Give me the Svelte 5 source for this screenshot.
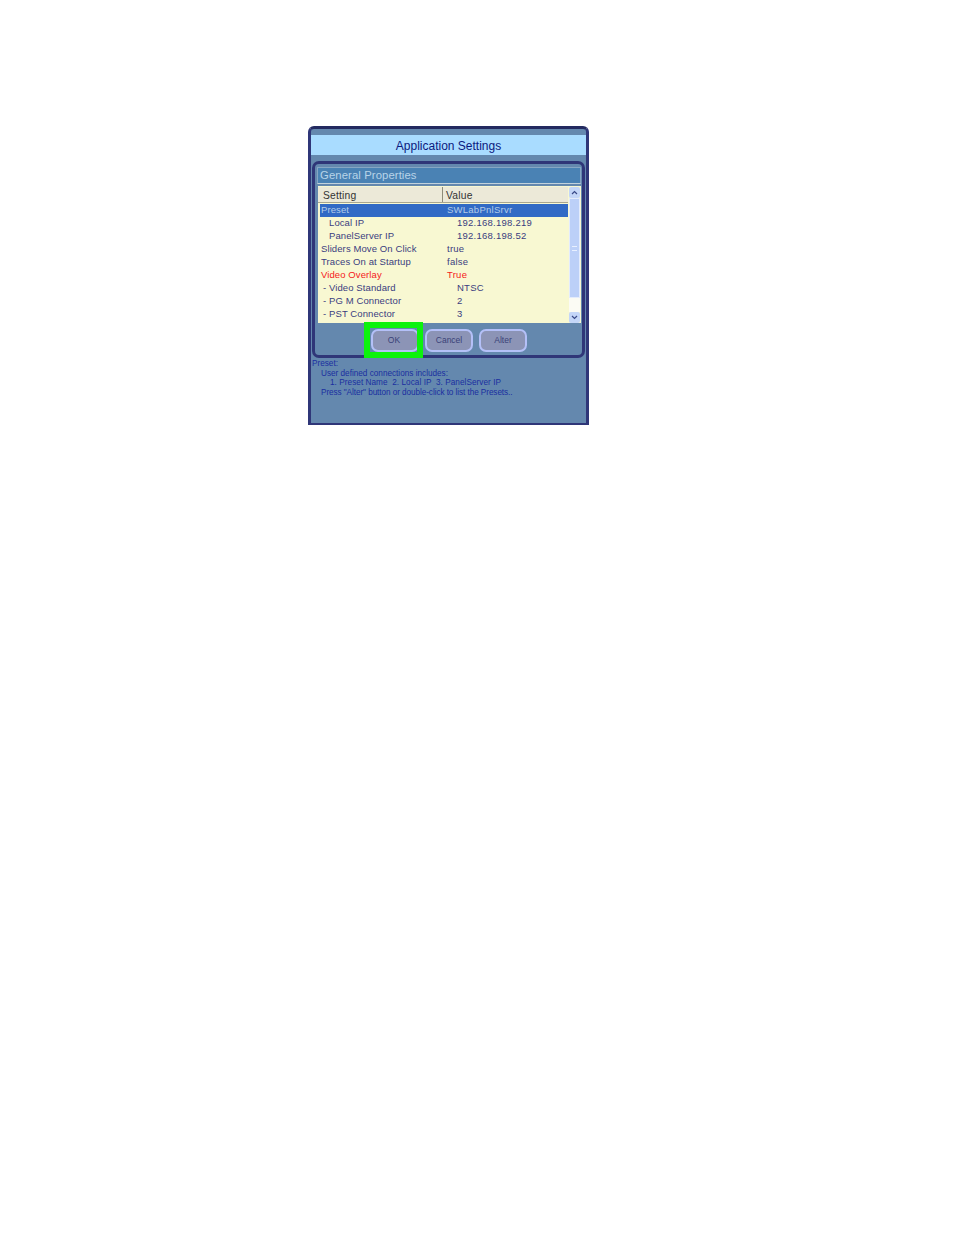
<script>
  const rows = [
    { name: 'Preset', value: 'SWLabPnlSrvr', selected: true },
    { name: 'Local IP', value: '192.168.198.219', sub: true },
    { name: 'PanelServer IP', value: '192.168.198.52', sub: true },
    { name: 'Sliders Move On Click', value: 'true' },
    { name: 'Traces On at Startup', value: 'false' },
    { name: 'Video Overlay', value: 'True', red: true },
    { name: '- Video Standard', value: 'NTSC', sub: true, dash: true },
    { name: '- PG M Connector', value: '2', sub: true, dash: true },
    { name: '- PST Connector', value: '3', sub: true, dash: true }
  ];
</script>

<div class="page">
  <div class="window">
    <div class="title">Application Settings</div>
    <div class="panel">
      <div class="section">General Properties</div>
      <div class="list">
        <div class="table">
          <div class="head">
            <div class="hcell first">Setting</div>
            <div class="hcell">Value</div>
          </div>
          {#each rows as r}
            <div class="row" class:selected={r.selected} class:red={r.red} class:sub={r.sub} class:dash={r.dash}>
              <span class="name">{r.name}</span>
              <span class="value">{r.value}</span>
            </div>
          {/each}
        </div>
        <div class="scroll">
          <div class="arrow">
            <svg width="7" height="5" viewBox="0 0 7 5"><path d="M1 4 L3.5 1.5 L6 4" fill="none" stroke="#3a4a88" stroke-width="1.2"/></svg>
          </div>
          <div class="thumb"><span class="grip"></span></div>
          <div class="track"></div>
          <div class="arrow">
            <svg width="7" height="5" viewBox="0 0 7 5"><path d="M1 1 L3.5 3.5 L6 1" fill="none" stroke="#3a4a88" stroke-width="1.2"/></svg>
          </div>
        </div>
      </div>
      <div class="buttons">
        <button class="ok">OK<span class="highlight"></span></button>
        <button>Cancel</button>
        <button>Alter</button>
      </div>
    </div>
    <div class="help">
      <div>Preset:</div>
      <div class="l1">User defined connections includes:</div>
      <div class="l2">1. Preset Name &nbsp;2. Local IP &nbsp;3. PanelServer IP</div>
      <div class="l1 tight">Press "Alter" button or double-click to list the Presets..</div>
    </div>
  </div>
</div>

<style>
  :global(body) {
    background: #fff;
  }

  .page {
    padding: 126px 0 0 308px;
    height: 1109px;
    font-family: "Liberation Sans", Arial, sans-serif;
  }

  .window {
    box-sizing: border-box;
    width: 281px;
    height: 299px;
    background: #6488ae;
    border: solid #2f3678;
    border-width: 3px 3px 2px 3px;
    border-top-color: #232a60;
    border-radius: 6px 6px 0 0;
    padding-top: 6px;
  }

  .title {
    height: 20px;
    background: #a9dcff;
    color: #0a1a80;
    font-size: 12px;
    line-height: 22px;
    text-align: center;
  }

  .panel {
    box-sizing: border-box;
    margin: 6px 1px 0 1px;
    height: 197px;
    border: 3px solid #2f3678;
    border-radius: 7px;
    padding: 3px 1px 0 2px;
    width: 273px;
  }

  .section {
    box-sizing: border-box;
    height: 17px;
    width: 264px;
    background: #4a82b4;
    border: 1px solid #86a6c4;
    border-bottom-color: #c2d2dc;
    color: #b8d4e8;
    font-size: 11.3px;
    line-height: 14px;
    padding-left: 2px;
    letter-spacing: 0.1px;
  }

  .list {
    display: flex;
    box-sizing: border-box;
    margin: 2px 0 0 1px;
    width: 263px;
    height: 137px;
    background: #f8f8d2;
  }

  .table {
    width: 250px;
    flex: none;
  }

  .head {
    display: flex;
    height: 15px;
    margin-top: 1px;
    background: #ece9d8;
    border-bottom: 1px solid #a8a690;
  }

  .hcell {
    box-sizing: border-box;
    flex: 1;
    font-size: 10.3px;
    line-height: 17px;
    color: #333;
    padding-left: 3px;
    letter-spacing: 0.2px;
  }

  .hcell.first {
    flex: none;
    width: 125px;
    padding-left: 5px;
    border-right: 1px solid #8e8c78;
  }

  .row {
    display: flex;
    height: 13px;
    font-size: 9.5px;
    line-height: 11px;
    color: #3a3d80;
    margin-left: 2px;
    padding-left: 1px;
    white-space: nowrap;
    letter-spacing: 0.1px;
  }

  .row.selected {
    background: #316ac5;
    color: #b4cce8;
    margin-top: 1px;
  }

  .name {
    width: 126px;
    flex: none;
  }

  .value {
    letter-spacing: 0.25px;
  }

  .sub .name {
    padding-left: 8px;
    box-sizing: border-box;
  }

  .dash .name {
    padding-left: 2px;
  }

  .sub .value {
    padding-left: 10px;
  }

  .row.red {
    color: #f52020;
  }

  .scroll {
    display: flex;
    flex-direction: column;
    width: 11px;
    margin-left: 1px;
    padding-top: 1px;
    box-sizing: border-box;
  }

  .arrow {
    display: flex;
    align-items: center;
    justify-content: center;
    height: 11px;
    flex: none;
    background: #c4d6f8;
    border-radius: 2px;
  }

  .thumb {
    display: flex;
    align-items: center;
    justify-content: center;
    height: 100px;
    flex: none;
    background: #bcd0f8;
    border: 1px solid #e4ecfc;
    box-sizing: border-box;
  }

  .grip {
    width: 5px;
    height: 3px;
    border-top: 1px solid #e8f0ff;
    border-bottom: 1px solid #e8f0ff;
  }

  .track {
    flex: 1;
    background: #fbfbf4;
  }

  .buttons {
    display: flex;
    gap: 6px;
    margin: 6px 0 0 54px;
  }

  button {
    position: relative;
    box-sizing: border-box;
    width: 48px;
    height: 23px;
    padding: 0 0 2px;
    background: #8c94b6;
    border: 2px solid #b4c0f8;
    border-radius: 7px;
    color: #3a4278;
    font-family: inherit;
    font-size: 8.5px;
  }

  .ok {
    padding-right: 2px;
  }

  .highlight {
    position: absolute;
    left: -9px;
    top: -9px;
    width: 47px;
    height: 24px;
    border: 6px solid #0cf30c;
  }

  .help {
    font-size: 8.2px;
    line-height: 9.7px;
    color: #1a2fa0;
    padding-top: 1px;
    margin-left: 1px;
    white-space: nowrap;
  }

  .l1 {
    padding-left: 9px;
  }

  .l2 {
    padding-left: 18px;
    letter-spacing: 0.05px;
  }

  .tight {
    letter-spacing: -0.07px;
  }
</style>
